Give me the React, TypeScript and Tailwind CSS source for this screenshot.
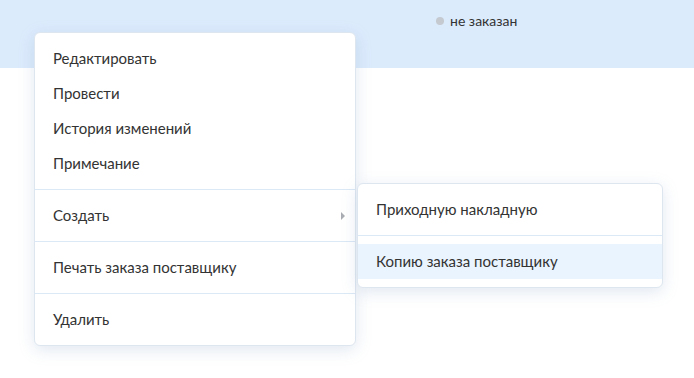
import React from 'react';

const font = { fontFamily: 'Lato, "Open Sans", "Liberation Sans", sans-serif' };

const Item: React.FC<{ label: string; active?: boolean; arrow?: boolean }> = ({ label, active, arrow }) => (
  <div
    className={
      'flex h-[35px] items-center justify-between pl-[18px] pr-[10px] text-[15px] text-[#333333] ' +
      (active ? 'bg-[#eaf4fe]' : '')
    }
  >
    <span>{label}</span>
    {arrow && <span className="h-0 w-0 border-y-[4px] border-l-[4px] border-y-transparent border-l-[#a9adb3]" />}
  </div>
);

const Divider = () => <div className="h-px bg-[#dbe8f5]" />;

export default function App() {
  return (
    <div className="relative h-[378px] w-[694px] overflow-hidden bg-white" style={font}>
      <div className="h-[68px] bg-[#dcebfc]">
        <div className="flex items-center gap-[6px] pl-[436px] pt-[10px] text-[14px] text-[#333333]">
          <span className="h-[8px] w-[8px] rounded-full bg-[#c5c9d0]" />
          <span>не заказан</span>
        </div>
      </div>

      {/* main context menu */}
      <div className="absolute left-[34px] top-[32px] w-[322px] rounded-[6px] border border-[#dde6ef] bg-white shadow-[0_4px_16px_rgba(120,150,190,0.22)]">
        <div className="py-[8px]">
          <Item label="Редактировать" />
          <Item label="Провести" />
          <Item label="История изменений" />
          <Item label="Примечание" />
        </div>
        <Divider />
        <div className="py-[8px]">
          <Item label="Создать" arrow />
        </div>
        <Divider />
        <div className="py-[8px]">
          <Item label="Печать заказа поставщику" />
        </div>
        <Divider />
        <div className="py-[8px]">
          <Item label="Удалить" />
        </div>
      </div>

      {/* submenu */}
      <div className="absolute left-[357px] top-[183px] w-[306px] overflow-hidden rounded-[6px] border border-[#dde6ef] bg-white shadow-[0_4px_16px_rgba(120,150,190,0.22)]">
        <div className="py-[8px]">
          <Item label="Приходную накладную" />
        </div>
        <Divider />
        <div className="py-[8px]">
          <Item label="Копию заказа поставщику" active />
        </div>
      </div>
    </div>
  );
}
